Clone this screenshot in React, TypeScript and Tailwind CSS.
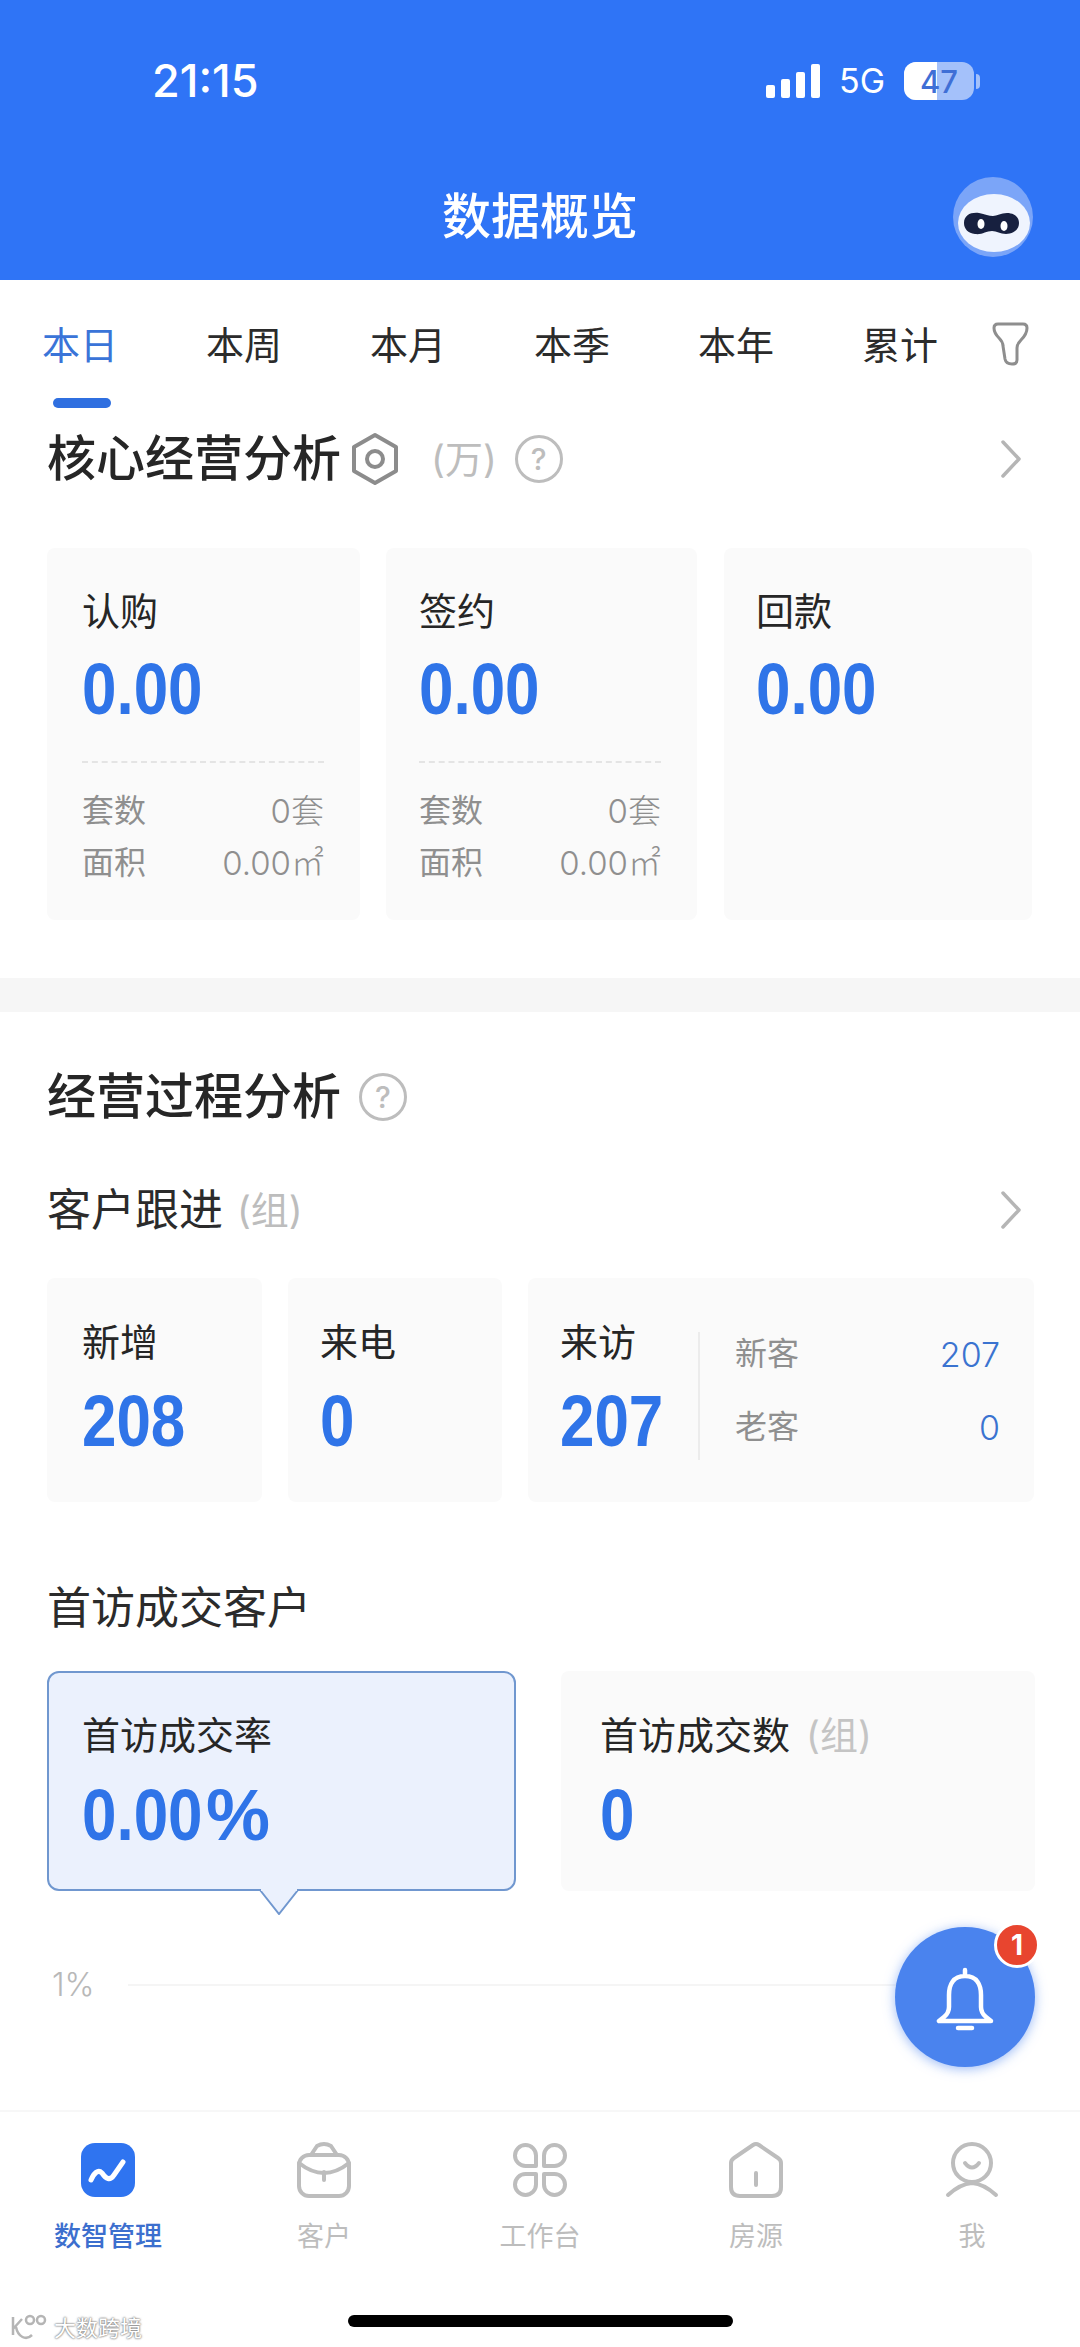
const tabs = ["本日", "本周", "本月", "本季", "本年", "累计"];

const numText = "font-['Liberation_Sans',sans-serif] font-bold text-[72px] leading-[60px] text-[#2f74e8]";

function Help() {
  return (
    <div className="w-12 h-12 rounded-full border-[3.5px] border-[#bdbdbd] text-[#bdbdbd] text-[30px] font-medium flex items-center justify-center">?</div>
  );
}

function Chevron() {
  return (
    <svg width="22" height="38" viewBox="0 0 22 38" fill="none" stroke="#b5b5b5" strokeWidth="3.5" strokeLinecap="round" strokeLinejoin="round">
      <path d="M3 2 L19 19 L3 36" />
    </svg>
  );
}

function Robot() {
  return (
    <svg width="80" height="81" viewBox="0 0 80 81">
      <circle cx="40" cy="40" r="40" fill="#7ba5f8" />
      <ellipse cx="41" cy="46" rx="36" ry="29" fill="#eff4fe" />
      <path d="M11 46 C11 38 18 35 26 36 C32 37 36 39 40 39 C44 39 48 36 54 36 C61 36 66 40 66 46 C66 53 60 57 53 57 C47 57 44 54 39 54 C33 54 29 58 22 57 C15 56 11 52 11 46 Z" fill="#17203f" />
      <ellipse cx="28" cy="47" rx="3.5" ry="5" fill="#fff" />
      <ellipse cx="51" cy="49" rx="3.5" ry="5" fill="#fff" />
    </svg>
  );
}

function Num({ children, className = "" }: { children: React.ReactNode; className?: string }) {
  return <div className={`origin-left scale-x-[0.86] whitespace-nowrap ${numText} ${className}`}>{children}</div>;
}

function StatCard({ label, value, rows, className }: { label: string; value: string; rows?: boolean; className: string }) {
  return (
    <div className={`h-[372px] bg-[#fafafa] rounded-lg pt-[43px] pr-[36px] ${className}`}>
      <div className="text-[38px] leading-[40px] text-[#262626]">{label}</div>
      <Num className="mt-[28px]">{value}</Num>
      {rows && (
        <>
          <div className="mt-[42px] border-t-2 border-dashed border-[#e4e4e4]" />
          <div className="mt-[28px] flex justify-between text-[32px] leading-[40px] text-[#8f8f8f]">
            <span>套数</span>
            <span className="font-light text-[33px]">0套</span>
          </div>
          <div className="mt-[12px] flex justify-between text-[32px] leading-[40px] text-[#8f8f8f]">
            <span>面积</span>
            <span className="font-light text-[33px]">0.00㎡</span>
          </div>
        </>
      )}
    </div>
  );
}

function SmallCard({ label, value, className }: { label: string; value: string; className: string }) {
  return (
    <div className={`h-[224px] bg-[#fafafa] rounded-lg pt-[44px] ${className}`}>
      <div className="text-[38px] leading-[40px] text-[#262626]">{label}</div>
      <Num className="mt-[29px]">{value}</Num>
    </div>
  );
}

const navItems = [
  {
    label: "数智管理",
    icon: (
      <>
        <rect x="0" y="0" width="54" height="54" rx="14" fill="#2f74f0" stroke="none" />
        <path d="M10 37 C13 30 17 26 21 30 C25 36 29 38 33 32 L42 19" stroke="#fff" strokeWidth="5" />
      </>
    ),
  },
  {
    label: "客户",
    icon: (
      <>
        <rect x="2" y="12" width="50" height="41" rx="10" />
        <path d="M14 12 L20 3 Q27 -1 34 3 L40 12" />
        <path d="M2 20 Q27 40 52 20" />
        <path d="M27 29 V37" />
      </>
    ),
  },
  {
    label: "工作台",
    icon: (
      <>
        <path d="M12.5 2 A10.5 10.5 0 0 1 23 12.5 V23 H12.5 A10.5 10.5 0 0 1 12.5 2 Z" />
        <path d="M41.5 2 A10.5 10.5 0 0 0 31 12.5 V23 H41.5 A10.5 10.5 0 0 0 41.5 2 Z" />
        <path d="M12.5 52 A10.5 10.5 0 0 0 23 41.5 V31 H12.5 A10.5 10.5 0 0 0 12.5 52 Z" />
        <path d="M41.5 52 A10.5 10.5 0 0 1 31 41.5 V31 H41.5 A10.5 10.5 0 0 1 41.5 52 Z" />
      </>
    ),
  },
  {
    label: "房源",
    icon: (
      <>
        <path d="M2 20 Q2 17 5 15 L24 2 Q27 0 30 2 L49 15 Q52 17 52 20 V44 Q52 53 43 53 H11 Q2 53 2 44 Z" />
        <path d="M27 30 V42" />
      </>
    ),
  },
  {
    label: "我",
    icon: (
      <>
        <circle cx="27" cy="20" r="19" />
        <path d="M20 20 Q27 29 34 20" />
        <path d="M3 52 Q15 41 27 40 Q39 41 51 52" />
      </>
    ),
  },
];

export default function App() {
  return (
    <div className="relative w-[1080px] h-[2347px] overflow-hidden bg-white flex flex-col font-['Inter','Noto_Sans_CJK_SC',sans-serif]">
      {/* blue header */}
      <div className="h-[280px] shrink-0 bg-[#2f74f6] text-white">
        <div className="pt-[58px] pl-[152px] flex items-center h-[104px]">
          <span className="text-[45px] font-medium leading-[46px] w-[614px]">21:15</span>
          <div className="flex items-end gap-[6px] h-[34px]">
            <div className="w-[9px] h-[13px] bg-white rounded-[2px]" />
            <div className="w-[9px] h-[19px] bg-white rounded-[2px]" />
            <div className="w-[9px] h-[26px] bg-white rounded-[2px]" />
            <div className="w-[9px] h-[34px] bg-white rounded-[2px]" />
          </div>
          <span className="ml-[19px] text-[34px] leading-[40px]">5G</span>
          <div className="ml-[19px] relative w-[70px] h-[38px] rounded-[12px] bg-[#a4c1fa] overflow-hidden">
            <div className="absolute left-0 top-0 bottom-0 w-[33px] bg-white" />
            <div className="absolute inset-0 flex items-center justify-center text-[31px] font-medium leading-none text-[#3f6fd6]">47</div>
          </div>
          <div className="ml-[2px] w-[4px] h-[15px] rounded-r-full bg-[#a4c1fa]" />
        </div>
        <div className="mt-[83px] grid grid-cols-[1fr_auto_1fr] items-center px-[47px]">
          <div />
          <h1 className="text-[49px] font-medium leading-[60px]">数据概览</h1>
          <div className="flex justify-end h-[60px] items-center">
            <Robot />
          </div>
        </div>
      </div>

      {/* period tabs */}
      <div className="shrink-0 flex items-start pl-[44px] pt-[43px] h-[128px]">
        <div className="flex gap-[92px]">
          {tabs.map((t, i) => (
            <div key={t} className="w-[72px] flex flex-col items-center">
              <span className={`text-[38px] leading-[44px] whitespace-nowrap ${i === 0 ? "text-[#3a74d8]" : "text-[#2b2b2b]"}`}>{t}</span>
              {i === 0 && <div className="mt-[31px] ml-[4px] w-[58px] h-[10px] rounded-full bg-[#2f6fe0]" />}
            </div>
          ))}
        </div>
        <svg className="ml-[56px] mt-[-1px]" width="37" height="44" viewBox="0 0 37 44" fill="none" stroke="#8e8e8e" strokeWidth="3" strokeLinejoin="round">
          <path d="M6 2 H31 Q35 2 35 6 Q35 12 29 18 Q25 22 25 26 V38 Q25 42 20 42 Q14 42 13 37 L11 24 Q11 20 7 16 Q2 11 2 6 Q2 2 6 2 Z" />
        </svg>
      </div>

      {/* core analysis */}
      <div className="shrink-0 px-[47px] mt-[24px] h-[54px] flex items-center">
        <h2 className="text-[49px] font-medium leading-[54px] text-[#262626]">核心经营分析</h2>
        <svg className="ml-[9px]" width="50" height="54" viewBox="0 0 50 54" fill="none" stroke="#8c8c8c" strokeWidth="4" strokeLinejoin="round">
          <path d="M25 3 L46 15 V39 L25 51 L4 39 V15 Z" />
          <circle cx="25" cy="27" r="8" />
        </svg>
        <span className="ml-[31px] text-[38px] leading-[44px] text-[#bdbdbd]">(万)</span>
        <div className="ml-[18px]"><Help /></div>
        <div className="ml-auto mr-[11px]"><Chevron /></div>
      </div>
      <div className="shrink-0 mt-[62px] pl-[47px] flex">
        <StatCard className="w-[313px] pl-[35px]" label="认购" value="0.00" rows />
        <StatCard className="w-[311px] ml-[26px] pl-[33px]" label="签约" value="0.00" rows />
        <StatCard className="w-[308px] ml-[27px] pl-[32px]" label="回款" value="0.00" />
      </div>
      <div className="shrink-0 mt-[58px] h-[34px] bg-[#f6f6f6]" />

      {/* process analysis */}
      <div className="shrink-0 px-[47px] mt-[61px] h-[48px] flex items-center">
        <h2 className="text-[49px] font-medium leading-[54px] text-[#262626]">经营过程分析</h2>
        <div className="ml-[18px]"><Help /></div>
      </div>
      <div className="shrink-0 px-[47px] mt-[67px] h-[44px] flex items-center">
        <span className="text-[44px] leading-[44px] text-[#2b2b2b]">客户跟进</span>
        <span className="ml-[14px] text-[38px] leading-[44px] text-[#bdbdbd]">(组)</span>
        <div className="ml-auto mr-[11px]"><Chevron /></div>
      </div>
      <div className="shrink-0 mt-[46px] pl-[47px] flex gap-[26px]">
        <SmallCard className="w-[215px] pl-[35px]" label="新增" value="208" />
        <SmallCard className="w-[214px] pl-[32px]" label="来电" value="0" />
        <div className="w-[506px] h-[224px] bg-[#fafafa] rounded-lg pt-[44px] pl-[32px] flex">
          <div className="w-[138px] shrink-0">
            <div className="text-[38px] leading-[40px] text-[#262626]">来访</div>
            <Num className="mt-[29px]">207</Num>
          </div>
          <div className="mt-[10px] w-[2px] h-[128px] bg-[#ececec]" />
          <div className="ml-[35px] w-[265px] pt-[12px]">
            <div className="flex justify-between items-center h-[40px]">
              <span className="text-[32px] text-[#8f8f8f]">新客</span>
              <span className="text-[34px] text-[#3a73d0] font-light">207</span>
            </div>
            <div className="mt-[33px] flex justify-between items-center h-[40px]">
              <span className="text-[32px] text-[#8f8f8f]">老客</span>
              <span className="text-[34px] text-[#3a73d0] font-light">0</span>
            </div>
          </div>
        </div>
      </div>

      {/* first-visit deals */}
      <div className="shrink-0 px-[47px] mt-[84px] text-[44px] leading-[44px] text-[#2b2b2b]">首访成交客户</div>
      <div className="shrink-0 mt-[41px] pl-[47px] flex">
        <div className="relative w-[469px] h-[220px] bg-[#ebf1fd] border-2 border-[#7097cf] rounded-[12px] pt-[40px] pl-[33px]">
          <div className="text-[38px] leading-[44px] text-[#262626]">首访成交率</div>
          <div className="mt-[28px] flex">
            <Num className="w-[124px]">0.00</Num>
            <div className={numText}>%</div>
          </div>
          <svg className="absolute left-[210px] top-[216px]" width="40" height="26" viewBox="0 0 40 26">
            <path d="M1 1 L20 25 L39 1" fill="#ebf1fd" stroke="#7097cf" strokeWidth="2" />
            <rect x="2" y="0" width="36" height="2" fill="#ebf1fd" />
          </svg>
        </div>
        <div className="ml-[45px] w-[474px] h-[220px] bg-[#fafafa] rounded-lg pt-[42px] pl-[39px]">
          <div className="flex items-center leading-[44px]">
            <span className="text-[38px] text-[#262626]">首访成交数</span>
            <span className="ml-[16px] text-[38px] text-[#c4c4c4]">(组)</span>
          </div>
          <Num className="mt-[28px]">0</Num>
        </div>
      </div>
      <div className="shrink-0 mt-[74px] h-[40px] pl-[52px] flex items-center">
        <span className="text-[32px] font-light text-[#b8b8b8] w-[76px]">1%</span>
        <div className="w-[770px] h-[2px] bg-[#f5f5f5]" />
      </div>
      <div className="flex-1" />

      {/* bottom nav */}
      <div className="shrink-0 h-[237px] border-t-2 border-[#f7f7f7] pt-[31px]">
        <div className="grid grid-cols-5">
          {navItems.map((n, i) => (
            <div key={n.label} className="flex flex-col items-center">
              <svg width="54" height="54" viewBox="0 0 54 54" fill="none" stroke="#bdbdbd" strokeWidth="4" strokeLinecap="round" strokeLinejoin="round" className="overflow-visible">
                {n.icon}
              </svg>
              <span className={`mt-[25px] text-[27px] leading-[30px] ${i === 0 ? "text-[#3c6fce] font-medium" : "text-[#bdbdbd]"}`}>{n.label}</span>
            </div>
          ))}
        </div>
        <div className="mt-[63px] mx-auto w-[385px] h-[12px] rounded-full bg-black" />
      </div>

      {/* floating bell */}
      <div className="absolute left-[895px] top-[1927px] w-[140px] h-[140px] rounded-full bg-[#4a83ee] shadow-[0_2px_12px_rgba(74,131,238,0.55)] flex items-center justify-center">
        <svg className="mt-[6px]" width="58" height="66" viewBox="0 0 58 66" fill="none" stroke="#fff" strokeWidth="4.5" strokeLinejoin="round" strokeLinecap="round">
          <path d="M29 3 V9 M29 9 C17 9 13 18 13 28 V40 Q13 46 8 50 L3 54 H55 L50 50 Q45 46 45 40 V28 C45 18 41 9 29 9 Z" />
          <path d="M22 61 H36" />
        </svg>
        <div className="absolute left-[99px] top-[-5px] w-[46px] h-[46px] rounded-full bg-[#e8452f] border-[3px] border-white text-white text-[28px] font-bold flex items-center justify-center leading-none">1</div>
      </div>

      {/* watermark */}
      <div className="absolute left-[10px] top-[2313px] flex items-center text-white text-[22px] leading-[28px] [text-shadow:0_0_2px_#777,0_0_2px_#777]">
        <svg width="42" height="30" viewBox="0 0 42 30" fill="none" stroke="#b5b5b5" strokeWidth="2.5">
          <path d="M3 4 V22 M3 16 L12 6 M6 14 C8 24 16 28 22 22" />
          <circle cx="20" cy="7" r="4" />
          <circle cx="31" cy="7" r="4" />
        </svg>
        <span className="ml-[2px]">大数跨境</span>
      </div>
    </div>
  );
}
